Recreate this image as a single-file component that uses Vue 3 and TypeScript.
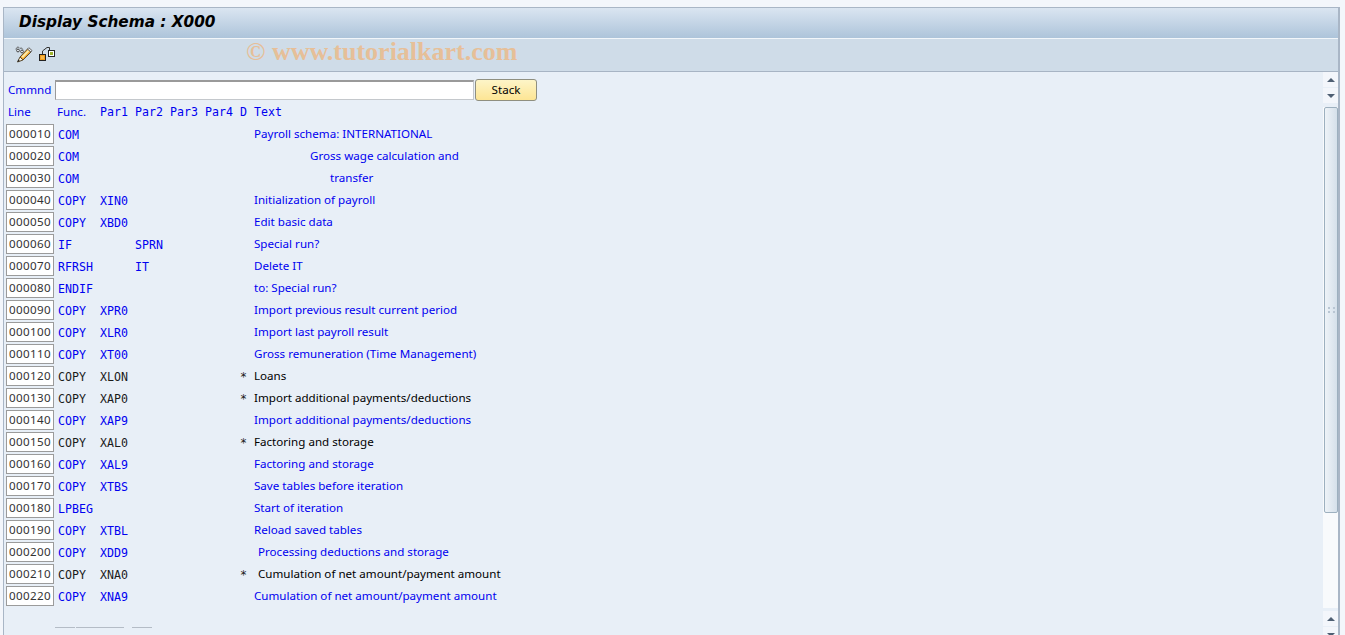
<script setup lang="ts">
interface Row {
  line: string
  func: string
  par1?: string
  par2?: string
  d?: string
  text: string
  indent?: number
  dark?: boolean
}

const rows: Row[] = [
  { line: '000010', func: 'COM', text: 'Payroll schema: INTERNATIONAL' },
  { line: '000020', func: 'COM', text: 'Gross wage calculation and', indent: 56 },
  { line: '000030', func: 'COM', text: 'transfer', indent: 76 },
  { line: '000040', func: 'COPY', par1: 'XIN0', text: 'Initialization of payroll' },
  { line: '000050', func: 'COPY', par1: 'XBD0', text: 'Edit basic data' },
  { line: '000060', func: 'IF', par2: 'SPRN', text: 'Special run?' },
  { line: '000070', func: 'RFRSH', par2: 'IT', text: 'Delete IT' },
  { line: '000080', func: 'ENDIF', text: 'to: Special run?' },
  { line: '000090', func: 'COPY', par1: 'XPR0', text: 'Import previous result current period' },
  { line: '000100', func: 'COPY', par1: 'XLR0', text: 'Import last payroll result' },
  { line: '000110', func: 'COPY', par1: 'XT00', text: 'Gross remuneration (Time Management)' },
  { line: '000120', func: 'COPY', par1: 'XLON', d: '*', text: 'Loans', dark: true },
  { line: '000130', func: 'COPY', par1: 'XAP0', d: '*', text: 'Import additional payments/deductions', dark: true },
  { line: '000140', func: 'COPY', par1: 'XAP9', text: 'Import additional payments/deductions' },
  { line: '000150', func: 'COPY', par1: 'XAL0', d: '*', text: 'Factoring and storage', dark: true },
  { line: '000160', func: 'COPY', par1: 'XAL9', text: 'Factoring and storage' },
  { line: '000170', func: 'COPY', par1: 'XTBS', text: 'Save tables before iteration' },
  { line: '000180', func: 'LPBEG', text: 'Start of iteration' },
  { line: '000190', func: 'COPY', par1: 'XTBL', text: 'Reload saved tables' },
  { line: '000200', func: 'COPY', par1: 'XDD9', text: 'Processing deductions and storage', indent: 4 },
  { line: '000210', func: 'COPY', par1: 'XNA0', d: '*', text: 'Cumulation of net amount/payment amount', indent: 4, dark: true },
  { line: '000220', func: 'COPY', par1: 'XNA9', text: 'Cumulation of net amount/payment amount' },
]

const grips = [0, 1, 2, 3]
</script>

<template>
  <div class="page">
    <div class="frame">
      <header class="title">Display Schema : X000</header>
      <div class="toolbar">
        <svg class="tool" width="18" height="18" viewBox="0 0 18 18">
          <path d="M1 4.500C1.500 2 3 1.500 4.500 3M5 3.500C6 2.800 7.200 3 7.800 4.500" fill="none" stroke="#555" />
          <circle cx="3" cy="5.500" r="1.400" fill="#e8eef5" stroke="#444" />
          <circle cx="7" cy="6.500" r="1.400" fill="#e8eef5" stroke="#444" />
          <path d="M5 12 12.500 4 16 7 8 15z" fill="#f1a52c" stroke="#5a4a30" />
          <path d="M6.500 11.500 13 5l1.500 1.300L8 13z" fill="#fbe9a8" />
          <path d="m12.500 4 1.300-1.300L17 5.500 16 7z" fill="#f0f3f7" stroke="#666" />
          <path d="M5 12 8 15 2.500 17z" fill="#fff4d8" stroke="#5a4a30" />
          <path d="m2.500 17 .8-2.400 1.600 1.500z" fill="#222" />
        </svg>
        <svg class="tool" width="16" height="16" viewBox="0 0 16 16">
          <path d="M3.500 8V5L8 1.500h2.500V4" fill="none" stroke="#333" />
          <rect x="0.500" y="8.500" width="6" height="6" fill="#f09c1e" stroke="#222" />
          <rect x="2" y="10" width="3" height="3" fill="#f7b84a" />
          <rect x="9.500" y="4.500" width="6" height="6" fill="#fff" stroke="#222" />
          <rect x="11" y="6" width="3" height="3" fill="#9fb52c" />
        </svg>
        <span class="watermark">© www.tutorialkart.com</span>
      </div>
      <div class="body">
        <main class="content">
          <div class="command">
            <label class="cmd-label">Cmmnd</label>
            <div class="cmd-input"></div>
            <button class="stack">Stack</button>
          </div>
          <div class="grid head">
            <span class="sans lift hline">Line</span>
            <span class="sans lift">Func.</span>
            <span class="mono lift">Par1</span>
            <span class="mono lift">Par2</span>
            <span class="mono lift">Par3</span>
            <span class="mono lift">Par4</span>
            <span class="mono lift">D</span>
            <span class="mono lift">Text</span>
          </div>
          <div v-for="r in rows" :key="r.line" class="grid row" :class="{ dark: r.dark }">
            <span class="line-box">{{ r.line }}</span>
            <span class="mono func">{{ r.func }}</span>
            <span class="mono">{{ r.par1 }}</span>
            <span class="mono">{{ r.par2 }}</span>
            <span></span>
            <span></span>
            <span class="mono">{{ r.d }}</span>
            <span class="sans lift text" :style="{ paddingLeft: (r.indent ?? 0) + 'px' }">{{ r.text }}</span>
          </div>
          <div class="stubs">
            <i class="s1"></i><i class="s2"></i><i class="s3"></i>
          </div>
        </main>
        <aside class="scrollbar">
          <span class="arrow"><b class="up"></b></span>
          <span class="arrow"><b class="down"></b></span>
          <div class="track">
            <div class="thumb">
              <div class="grip"><u v-for="g in grips" :key="g"></u></div>
            </div>
          </div>
          <span class="arrow"><b class="up"></b></span>
          <span class="arrow"><b class="down"></b></span>
        </aside>
      </div>
    </div>
  </div>
</template>

<style scoped>
.page {
  height: 635px;
  overflow: hidden;
  box-sizing: border-box;
  padding: 7px 5px 0 3px;
  background: #f3f6fb;
}
.frame {
  height: 640px;
  box-sizing: border-box;
  display: flex;
  flex-direction: column;
  border-left: 1px solid #a9b6c6;
  border-top: 1px solid #a9b6c6;
  border-right: 2px solid #a9b6c6;
}
.title {
  height: 31px;
  box-sizing: border-box;
  padding: 4px 0 0 15px;
  font: italic bold 15.3px/20px "DejaVu Sans", sans-serif;
  color: #000;
  background: linear-gradient(#dae5f1, #adc4da);
  border-bottom: 1px solid #f2f6fa;
}
.toolbar {
  position: relative;
  height: 33px;
  box-sizing: border-box;
  display: flex;
  align-items: center;
  gap: 6px;
  padding: 0 0 3px 11px;
  background: #cfdce8;
  border-bottom: 1px solid #a7b4c4;
}
.tool { display: block; }
.watermark {
  position: absolute;
  left: 242px;
  top: -2px;
  font: bold 26px/30px "Liberation Serif", serif;
  color: #e6bf98;
  white-space: nowrap;
}
.body {
  flex: 1;
  display: flex;
  min-height: 0;
  background: #e8eff7;
}
.content {
  flex: 1;
  padding: 7px 0 0 2px;
  min-width: 0;
}
.command {
  height: 21px;
  display: flex;
  align-items: center;
}
.cmd-label {
  width: 49px;
  padding-left: 2px;
  box-sizing: border-box;
  font: 11.6px "Noto Sans", sans-serif;
  color: #0000f0;
}
.cmd-input {
  width: 419px;
  height: 20px;
  box-sizing: border-box;
  background: #fff;
  border: 1px solid #9a9a9a;
  border-bottom-color: #c4c8cc;
  border-right-color: #c4c8cc;
  border-top-width: 2px;
}
.stack {
  width: 62px;
  height: 22px;
  margin-left: 1px;
  padding: 0;
  box-sizing: border-box;
  border: 1px solid #8f8f80;
  border-radius: 3px;
  background: linear-gradient(#fdf5c8, #fde594);
  font: 11.6px "Noto Sans", sans-serif;
  color: #000;
}
.grid {
  display: grid;
  grid-template-columns: 51px 43px 35px 35px 35px 35px 14px 1fr;
  align-items: center;
  color: #0000f0;
  white-space: pre;
}
.head {
  height: 22px;
  margin-top: 2px;
}
.hline { padding-left: 2px; }
.row { height: 22px; }
.row.dark { color: #1a1a1a; }
.row.dark .text { color: #000; }
.func { padding-left: 1px; }
.mono {
  font: 11.6px/16px "DejaVu Sans Mono", monospace;
}
.sans {
  font: 11.6px/16px "Noto Sans", sans-serif;
}
.lift { margin-bottom: 2px; }
.line-box {
  align-self: start;
  width: 48px;
  height: 20px;
  box-sizing: border-box;
  background: #fff;
  border: 1px solid #9b9b9b;
  color: #333;
  text-align: center;
  font: 11.6px/18px "Noto Sans", sans-serif;
  letter-spacing: 0.35px;
}
.row.dark .mono { color: #1a1a1a; }
.stubs {
  display: flex;
  margin: 19px 0 0 49px;
}
.stubs i {
  display: block;
  height: 1px;
  background: #b4bcc6;
}
.s1 { width: 20px; }
.s2 { width: 48px; margin-left: 1px; }
.s3 { width: 20px; margin-left: 8px; }
.scrollbar {
  width: 15px;
  display: flex;
  flex-direction: column;
  flex-shrink: 0;
  align-items: stretch;
}
.arrow {
  height: 15px;
  margin-bottom: 1px;
  display: flex;
  align-items: center;
  justify-content: center;
  background: #f3f6fb;
}
.arrow b {
  width: 0;
  height: 0;
  border-left: 4px solid transparent;
  border-right: 4px solid transparent;
}
.up { border-bottom: 4px solid #4e5f73; }
.down { border-top: 4px solid #4e5f73; }
.track {
  flex: 0 0 501px;
  margin: 3px 0;
  background: #f8fafc;
}
.thumb {
  height: 406px;
  box-sizing: border-box;
  margin-left: 1px;
  border: 1px solid #9db0bf;
  border-radius: 2px;
  background: linear-gradient(90deg, #eef3f8, #d5e0ea);
  display: flex;
  align-items: center;
  justify-content: center;
}
.grip {
  display: grid;
  grid-template-columns: 2px 2px;
  gap: 2px 3px;
}
.grip u {
  display: block;
  width: 2px;
  height: 2px;
  background: #b9c6d3;
}
</style>

<style>
html, body { margin: 0; background: #f3f6fb; overflow: hidden; }
</style>
